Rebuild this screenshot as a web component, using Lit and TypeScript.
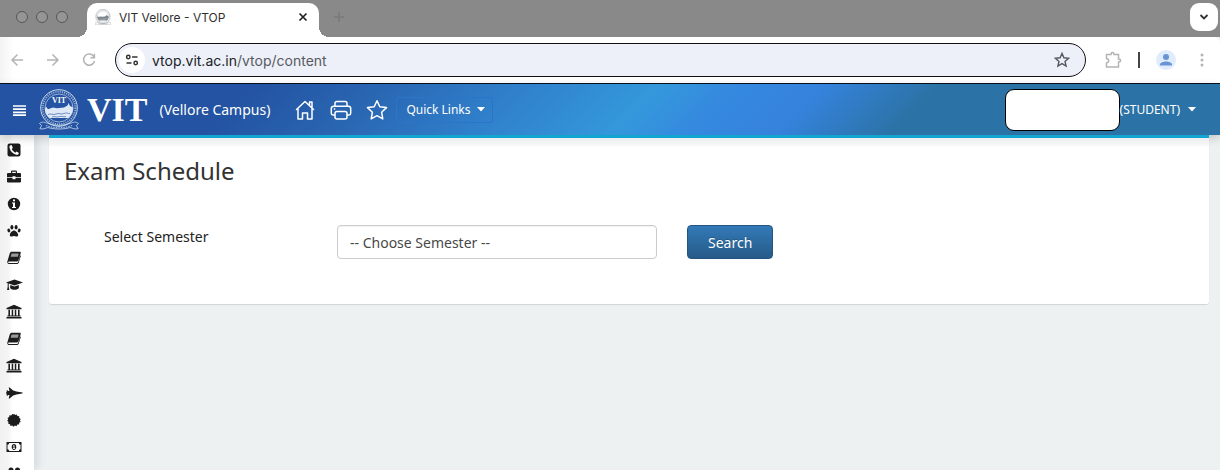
import { LitElement, html, svg, css } from "lit";
import { customElement } from "lit/decorators.js";

const GLYPHS: Record<string, unknown> = {
  phone: svg`<path fill-rule="evenodd" d="M2.500.5h9a2 2 0 0 1 2 2v9a2 2 0 0 1-2 2h-9a2 2 0 0 1-2-2v-9a2 2 0 0 1 2-2Zm1.300 1.600C2.700 2.500 2.300 3.400 2.500 4.800c.7 3.700 3.500 6.200 6.800 7 1.200.2 2.400-.4 2.600-1.900L9.500 8.500l-1.200 1.200C6.800 8.900 5.500 7.700 4.700 6.100l1.100-1.200-1-2.600Z"/>`,
  briefcase: svg`<path fill-rule="evenodd" d="M4 3V1.800A1.200 1.200 0 0 1 5.200.6h3.600A1.200 1.200 0 0 1 10 1.800V3h3a1 1 0 0 1 1 1v3.200H8.500v-.9h-3v.9H0V4a1 1 0 0 1 1-1h3Zm1.200 0h3.600V1.800H5.200V3ZM0 8h5.500v1.200h3V8H14v3.600a1 1 0 0 1-1 1H1a1 1 0 0 1-1-1V8Z"/>`,
  info: svg`<path fill-rule="evenodd" d="M7 .8a6.200 6.200 0 1 1 0 12.400A6.200 6.200 0 0 1 7 .8Zm-1 1.700v1.800h2V2.500H6ZM5 5.500v1h1v3.400H5V11h4V9.900H8V5.500H5Z"/>`,
  paw: svg`<ellipse cx="4.900" cy="3.200" rx="1.500" ry="2.200"/><ellipse cx="9.100" cy="3.200" rx="1.500" ry="2.200"/><ellipse cx="1.800" cy="6.500" rx="1.400" ry="1.900" transform="rotate(-20 1.800 6.500)"/><ellipse cx="12.200" cy="6.500" rx="1.400" ry="1.900" transform="rotate(20 12.200 6.500)"/><path d="M7 6.500c1.800 0 4.200 2.700 4.200 4.500 0 1.400-1.200 1.700-2.100 1.500-.8-.2-1.300-.6-2.100-.6s-1.300.4-2.100.6c-.9.200-2.100-.1-2.100-1.500 0-1.800 2.400-4.500 4.200-4.500Z"/>`,
  book: svg`<path fill-rule="evenodd" d="M4.800.8h7.700c1 0 1.500.6 1.200 1.500L11.300 9.600c-.2.500-.6.800-1.200.8H2c-.7 0-1 .5-.8 1 .2.400.5.500 1 .5h7.800c.5 0 .8-.2 1-.7l2.300-7c.5.300.6.800.4 1.400L11.600 12c-.3.700-.8 1.100-1.500 1.100H2.500C.8 13.100-.1 11.700.4 10.200L2.800 2.300C3.100 1.400 3.800.8 4.800.8Z"/><path d="M4.600 2.600h7.200l-1 3.200H3.600Z" fill="#9a9a9a"/>`,
  cap: svg`<path d="M7.500 1.500 16 4.500 7.500 7.500 1.700 5.500v3.200l.7 3.300H0l.7-3.300V5.200L-1 4.500l8.500-3Z"/><path d="M3.300 7.100 7.500 8.500l4.200-1.400.2 2.800c-.6 1.200-2.400 1.800-4.400 1.800s-3.800-.6-4.400-1.800l.2-2.800Z"/>`,
  bank: svg`<path d="M7-.2 14.500 3v1.200h-15V3L7-.2ZM1.400 4.800h1.600v5.600h1.700V4.800h1.500v5.600h1.600V4.800h1.500v5.600H11V4.800h1.600v5.600h1v1H.4v-1h1V4.800ZM-.5 12h15v1.400h-15z"/>`,
  jet: svg`<path d="M15.800 7c0 .4-1 .6-2 .7L9.500 8.500 6.200 9.600 2.600 12.500H1.700l.8-3.600H1.200L.4 9.700H-.3V8.100L-.8 7.800V6.200l.5-.3V4.300H.4l.8.800h1.300L1.700 1.500h.9l3.600 2.900 3.300 1.100 4.300.8c1 .1 2 .3 2 .7Z"/>`,
  certificate: svg`<path d="m7 .8 1.200 1.200L9.800 1.400l.6 1.700 1.900.2-.1 1.800L13.800 6 12.900 7.300l.8 1.500-1.500.9-.1 1.800-1.800.1-.8 1.600-1.600-.6L6.500 13.700 5.200 12.500l-1.700.4-.5-1.700-1.800-.4.3-1.800L.2 7.800 1.200 6.500.5 4.900l1.700-.8.2-1.800 1.800.1L5.200.9 6.400 1.500Z"/>`,
  money: svg`<path fill-rule="evenodd" d="M-.5 2h15v10h-15V2Zm1 2.800v4.400A1.800 1.800 0 0 1 2.200 11h9.600a1.800 1.800 0 0 1 1.700-1.800V4.800A1.800 1.800 0 0 1 11.800 3H2.200A1.800 1.800 0 0 1 .5 4.800ZM7 4.100c1.400 0 2.300 1.200 2.300 2.900S8.400 9.900 7 9.900 4.700 8.700 4.700 7 5.600 4.100 7 4.100Zm-.2 1.100-1 .7.400.6.400-.2v1.900h-.7v.7h2.200v-.7h-.6V5.200h-.7Z"/>`,
  users: svg`<circle cx="4" cy="3" r="2.500"/><circle cx="10.500" cy="3" r="2.500"/><path d="M0 11c0-3 1.500-5 4-5s3 1 3.300 1.500C7.800 7 8.500 6 10.500 6c2.500 0 3.500 2 3.500 5Z"/>`,
};

const MENU: [string, string][] = [
  ["phone", "Contact"],
  ["briefcase", "Proctor"],
  ["info", "Information"],
  ["paw", "Services"],
  ["book", "Courses"],
  ["cap", "Academics"],
  ["bank", "Institute"],
  ["book", "Examinations"],
  ["bank", "Departments"],
  ["jet", "Projects"],
  ["certificate", "Certificates"],
  ["money", "Payments"],
  ["users", "Groups"],
];

const crest = (showName: boolean) => svg`
  <g fill="none" stroke="currentColor">
    <circle cx="20" cy="19" r="18.300" stroke-width=".9"/>
    <circle cx="20" cy="19" r="16.300" stroke-width="2" stroke-dasharray="1.200 1" opacity=".6"/>
    <circle cx="20" cy="19" r="14" stroke-width=".8" opacity=".8"/>
    <path d="M.5 34.500c3-2.500 5-1 8-.3 7 2.800 16 2.800 23 0 3-.7 5-2.200 8 .3l-2.200 2 1.800 3.200c-3 .8-5-.3-8-1.200-6 2-16.200 2-22.200 0-3 .9-5 2-8 1.200l1.800-3.200Z" stroke-width=".9" opacity=".8"/>
    <path d="M7 36.500c8 3 18 3 26 0" stroke-width="1.200" stroke-dasharray="1.500 1" opacity=".7"/>
  </g>
  <path fill="currentColor" d="M5.800 20.500 7 17.500l2 2.700 5-1.700 4 .8 7-.8 3.500-2 1-2.500 1.500 3 3.200 1.500c0 4-1.700 8-4.700 10.500h-19c-2.700-2-4.400-5-4.700-8.500Z"/>
  <path d="M9 25.500c3-1.500 5 1 8-.5s5 1 8-.5 4 .5 6 0M13 28c3-1 5 .6 7-.3s4 .6 7-.2" fill="none" stroke="var(--crest-gap)" stroke-width=".6"/>
  ${showName ? svg`<text x="20" y="14" text-anchor="middle" class="crest-name">VIT</text>` : ""}`;

@customElement("browser-bar")
export class BrowserBar extends LitElement {
  static styles = css`
    :host { display: block; font-family: Inter, "Liberation Sans", sans-serif; }
    * { box-sizing: border-box; }
    button { border: 0; padding: 0; background: none; color: inherit; font: inherit; display: grid; place-items: center; flex: none; }
    svg { display: block; flex: none; }
    .strip { display: flex; height: 37px; background: #898989; padding: 3px 2px 0 16px; }
    .lights { display: flex; gap: 8px; height: 28px; align-items: center; width: 71px; }
    .light { width: 12px; height: 12px; border-radius: 50%; background: #959595; border: 1px solid #565656; }
    .tab { position: relative; display: flex; align-items: center; width: 232px; height: 34px; padding: 0 10px 6px 8px; border-radius: 10px 10px 0 0; background: #fff; color: #303030; font-size: 12px; }
    .tab::before, .tab::after { content: ""; position: absolute; bottom: 0; width: 10px; height: 10px; }
    .tab::before { left: -10px; background: radial-gradient(circle at 0 0, #898989 10px, #fff 10px); }
    .tab::after { right: -10px; background: radial-gradient(circle at 100% 0, #898989 10px, #fff 10px); }
    .favicon { color: #7c848c; --crest-gap: #fff; margin-right: 8px; }
    .title { flex: 1; white-space: nowrap; }
    .add { width: 20px; height: 28px; margin-left: 10px; color: #7a7a7a; }
    .menu { width: 28px; height: 28px; margin-left: auto; background: #fff; border-radius: 9px; color: #333; }
    .bar { display: flex; align-items: center; height: 47px; background: linear-gradient(90deg, #f3f3f3, #fff 14px); border-bottom: 1px solid #0b1022; padding: 0 10px 0 8px; color: #b4b4b4; border-radius: 0 6px 0 0; }
    .nav { display: flex; gap: 18px; width: 107px; }
    .address { display: flex; align-items: center; flex: 1; min-width: 0; height: 34px; border: 1px solid #111; border-radius: 17px; background: #edf0f8; padding: 0 14px 0 3px; }
    .site { width: 26px; height: 26px; border-radius: 50%; background: #fff; color: #333; }
    .url { flex: 1; margin-left: 7px; font-size: 14px; color: #575a60; white-space: nowrap; }
    .host { color: #202226; }
    .tools { display: flex; align-items: center; margin-left: 17px; }
    .divider { width: 2px; height: 16px; background: #444; margin: 0 16px 0 15px; }
    .person { width: 20px; height: 20px; border-radius: 50%; background: #dfecfb; color: #6a93d4; margin-right: 18px; overflow: hidden; }
    .mark { color: #55585d; }
  `;
  render() {
    return html`
      <div class="strip">
        <div class="lights"><span class="light"></span><span class="light"></span><span class="light"></span></div>
        <div class="tab">
          <svg class="favicon" width="16" height="16" viewBox="0 0 40 40">${crest(false)}</svg>
          <span class="title">VIT Vellore - VTOP</span>
          <button aria-label="Close tab"><svg width="12" height="12" viewBox="0 0 12 12" stroke="#222" stroke-width="1.700"><path d="m2.500 2.500 7 7m0-7-7 7"/></svg></button>
        </div>
        <button class="add" aria-label="New tab"><svg width="12" height="12" viewBox="0 0 12 12" stroke="currentColor" stroke-width="1.600"><path d="M6 1v10M1 6h10"/></svg></button>
        <button class="menu" aria-label="Search tabs"><svg width="10" height="10" viewBox="0 0 10 10" fill="none" stroke="currentColor" stroke-width="1.800"><path d="m1.500 3 3.500 3.500L8.500 3"/></svg></button>
      </div>
      <div class="bar">
        <div class="nav">
          <button aria-label="Back"><svg width="18" height="18" viewBox="0 0 18 18" fill="none" stroke="currentColor" stroke-width="1.500"><path d="M15 9H4m5.500-5.500L4 9l5.500 5.500"/></svg></button>
          <button aria-label="Forward"><svg width="18" height="18" viewBox="0 0 18 18" fill="none" stroke="currentColor" stroke-width="1.500"><path d="M3 9h11M8.500 3.500 14 9l-5.500 5.500"/></svg></button>
          <button aria-label="Reload"><svg width="18" height="18" viewBox="0 0 18 18" fill="none" stroke="currentColor" stroke-width="1.500"><path d="M14 5.800A5.600 5.600 0 1 0 14.600 10M14.400 2.800v4h-4"/></svg></button>
        </div>
        <div class="address">
          <button class="site" aria-label="Site information"><svg width="14" height="14" viewBox="0 0 14 14" fill="none" stroke="currentColor" stroke-width="1.500"><circle cx="3.300" cy="4" r="1.700"/><path d="M7 4h5.500M1.500 10h5"/><circle cx="10.700" cy="10" r="1.700"/></svg></button>
          <span class="url"><span class="host">vtop.vit.ac.in</span>/vtop/content</span>
          <button class="mark" aria-label="Bookmark"><svg width="18" height="18" viewBox="0 0 18 18" fill="none" stroke="currentColor" stroke-width="1.400"><path d="m9 2.400 1.900 4.400 4.700.4-3.600 3.200 1.100 4.700L9 12.600l-4.100 2.500L6 10.400 2.400 7.200l4.700-.4Z"/></svg></button>
        </div>
        <div class="tools">
          <button aria-label="Extensions"><svg width="20" height="20" viewBox="0 0 20 20" fill="none" stroke="currentColor" stroke-width="1.500"><path d="M3.500 4.500H8c0-1.500.8-2 1.500-2s1.500.5 1.500 2h4.500V9c1.500 0 2 .8 2 1.500s-.5 1.500-2 1.500v5h-12v-4c1.500-.2 2.200-1 2.200-2.200S5 8.700 3.500 8.500Z"/></svg></button>
          <span class="divider"></span>
          <button class="person" aria-label="Profile"><svg width="20" height="20" viewBox="0 0 20 20" fill="currentColor"><circle cx="10" cy="7" r="3"/><path d="M4 15.500v-1c0-2 3.500-3 6-3s6 1 6 3v1Z"/></svg></button>
          <button aria-label="Menu"><svg width="16" height="16" viewBox="0 0 16 16" fill="currentColor"><circle cx="8" cy="3" r="1.500"/><circle cx="8" cy="8" r="1.500"/><circle cx="8" cy="13" r="1.500"/></svg></button>
        </div>
      </div>`;
  }
}

@customElement("portal-header")
export class PortalHeader extends LitElement {
  static styles = css`
    :host { display: block; position: relative; z-index: 1; color: #fff; }
    * { box-sizing: border-box; }
    svg { display: block; flex: none; }
    button, a { color: inherit; font: inherit; text-decoration: none; display: flex; align-items: center; }
    button { background: none; border: 0; padding: 0; }
    .head { display: flex; align-items: center; height: 51px; padding: 0 24px 0 12px; background: linear-gradient(135deg, #2353a2 20%, #2a68b4 31%, #3080cb 41%, #3498db 52%, #3589df 58%, #3582dc 65%, #2b73a6 74%); box-shadow: 0 3px 9px rgba(0, 0, 0, .2); }
    .crest { margin-left: 12px; --crest-gap: #2353a2; color: #dfe9f6; }
    .crest-name { font: bold 8px "Liberation Serif", serif; fill: #fff; }
    .brand { margin-left: 8px; font: bold 34px/51px "Liberation Serif", serif; }
    .campus { margin-left: 12px; font-size: 14px; }
    .shortcuts { display: flex; align-items: center; gap: 8px; margin-left: 24px; }
    .icons { display: flex; gap: 14px; }
    .quick { gap: 6px; height: 26px; padding: 0 7px 0 9px; border: 1px solid #2a74cc; border-radius: 2px; font-size: 12px; }
    .account { display: flex; align-items: center; margin-left: auto; font-size: 12px; }
    .name { width: 115px; height: 42px; border: 1px solid #000; border-radius: 9px; background: #fff; }
    .role { gap: 8px; }
  `;
  render() {
    const caret = html`<svg width="8" height="5" viewBox="0 0 8 5" fill="currentColor"><path d="M0 0h8L4 4.500Z"/></svg>`;
    return html`
      <header class="head">
        <button aria-label="Toggle menu"><svg width="15" height="13" viewBox="0 0 15 13" stroke="currentColor" stroke-width="1.700"><path d="M1 3h13M1 6.200h13M1 9.400h13M1 12.100h13"/></svg></button>
        <svg class="crest" width="40" height="41" viewBox="0 0 40 41">${crest(true)}</svg>
        <span class="brand">VIT</span>
        <span class="campus">(Vellore Campus)</span>
        <nav class="shortcuts">
          <div class="icons">
            <a href="#home" aria-label="Home"><svg width="22" height="22" viewBox="0 0 22 22" fill="none" stroke="currentColor" stroke-width="1.500" stroke-linejoin="round" stroke-linecap="round"><path d="m2.500 10.500 8.500-8 8.500 8M4 9.500V20h4.500v-6h5v6H18V9.500M15.500 6V3H18v5.500"/></svg></a>
            <a href="#print" aria-label="Print"><svg width="22" height="22" viewBox="0 0 22 22" fill="none" stroke="currentColor" stroke-width="1.500"><path d="M5 7V4.500A2 2 0 0 1 7 2.500h8a2 2 0 0 1 2 2V7M5 16H3a1.700 1.700 0 0 1-1.700-1.700V9.500A2.300 2.300 0 0 1 3.600 7.200h14.800a2.300 2.300 0 0 1 2.300 2.300v4.800A1.700 1.700 0 0 1 19 16h-2"/><rect x="5" y="12.500" width="12" height="7.500" rx="2"/><path d="M3.800 10h1.500"/></svg></a>
            <a href="#favourites" aria-label="Favourites"><svg width="22" height="22" viewBox="0 0 22 22" fill="none" stroke="currentColor" stroke-width="1.500" stroke-linejoin="round"><path d="m11 1.800 2.800 6 6.700.8-4.900 4.600 1.200 6.700-5.800-3.200-5.800 3.200 1.200-6.700L1.500 8.600l6.700-.8Z"/></svg></a>
          </div>
          <button class="quick">Quick Links ${caret}</button>
        </nav>
        <div class="account">
          <span class="name"></span>
          <button class="role">(STUDENT) ${caret}</button>
        </div>
      </header>`;
  }
}

@customElement("app-root")
export class AppRoot extends LitElement {
  static styles = css`
    :host { display: flex; flex-direction: column; height: 100vh; overflow: hidden; background: #edf1f2; font-family: "Noto Sans", "Open Sans", sans-serif; font-size: 14px; color: #222; }
    * { box-sizing: border-box; }
    .body { display: flex; flex: 1; min-height: 0; }
    .side { width: 34px; flex: none; overflow: hidden; background: linear-gradient(90deg, #f1f1f1, #f4f4f4 8px, #fff 13px); box-shadow: 3px 0 9px rgba(60, 80, 100, .16); padding: 1px 0 0 7px; }
    .item { display: flex; align-items: center; height: 27px; color: #1c1c1c; }
    .item svg { display: block; overflow: visible; }
    .main { position: relative; z-index: 2; flex: 1; min-width: 0; padding: 0 11px 0 15px; }
    .card { border-top: 3px solid #12a5d2; border-radius: 0 0 3px 3px; background: linear-gradient(#eeeff0, #f4f5f5 6px, #fff 9px); box-shadow: 0 1px 1px rgba(0, 0, 0, .12); padding: 18px 15px 45px; }
    h1 { margin: 0; font-size: 24px; line-height: 30px; font-weight: 400; color: #333; }
    .form { display: grid; grid-template-columns: 203px minmax(0, 320px) auto; justify-content: start; column-gap: 30px; margin: 39px 0 0 40px; }
    .label { line-height: 24px; }
    .choice { appearance: none; width: 100%; height: 34px; border: 1px solid #ccc; border-radius: 4px; background: #fff; padding: 0 12px; color: #484848; font: inherit; box-shadow: inset 0 1px 1px rgba(0, 0, 0, .05); }
    .search { height: 34px; padding: 0 20px; border: 1px solid #245580; border-radius: 4px; background: linear-gradient(#337ab7, #265a88); color: #fff; font: inherit; text-shadow: 0 -1px 0 rgba(0, 0, 0, .2); }
  `;
  render() {
    return html`
      <browser-bar></browser-bar>
      <portal-header></portal-header>
      <div class="body">
        <nav class="side">
          ${MENU.map(([icon, label]) => html`<a class="item" href="#${label.toLowerCase()}" aria-label=${label}><svg width="14" height="14" viewBox="0 0 14 14" fill="currentColor">${GLYPHS[icon]}</svg></a>`)}
        </nav>
        <main class="main">
          <section class="card">
            <h1>Exam Schedule</h1>
            <form class="form" @submit=${(e: Event) => e.preventDefault()}>
              <label class="label" for="semester">Select Semester</label>
              <select class="choice" id="semester"><option>-- Choose Semester --</option></select>
              <button class="search">Search</button>
            </form>
          </section>
        </main>
      </div>`;
  }
}
